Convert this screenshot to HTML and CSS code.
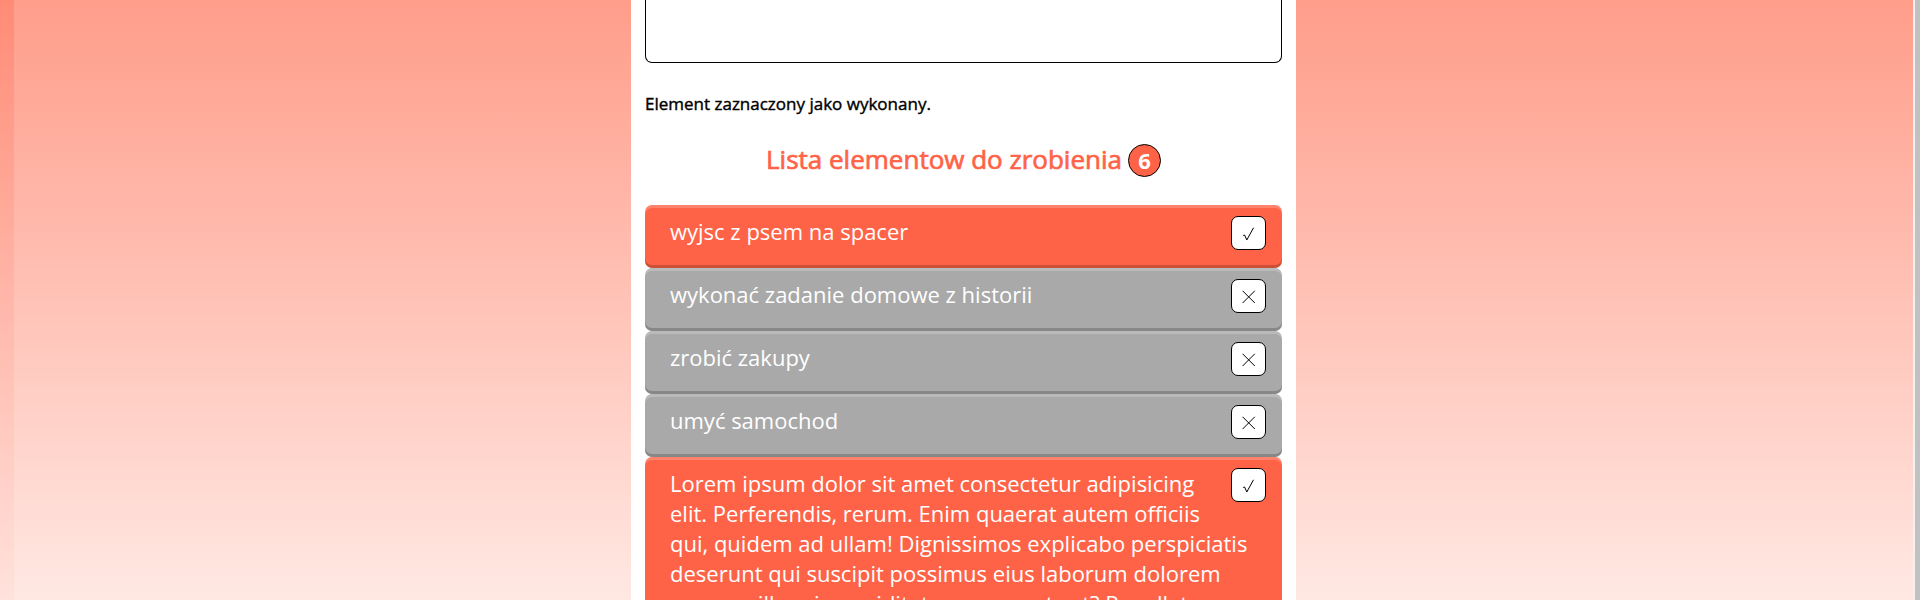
FILE: index.html
```html
<!DOCTYPE html>
<html lang="pl">
<head>
<meta charset="utf-8">
<title>Lista zadań</title>
<link rel="stylesheet" href="styles.css">
</head>
<body>
<div class="page">
  <div class="edge"></div>
  <main class="panel">
    <textarea class="entry" aria-label="Nowy element"></textarea>
    <p class="status">Element zaznaczony jako wykonany.</p>
    <h1 class="heading">Lista elementow do zrobienia <span class="count">6</span></h1>
    <ul class="list">
      <li class="item"><button class="toggle" aria-label="Wykonane"><svg class="icon" viewBox="0 0 14 14"><path d="M1.2 8.5L2.6 8L4.8 13L11.5 0.8"/></svg></button>wyjsc z psem na spacer</li>
      <li class="item done"><button class="toggle" aria-label="Cofnij"><svg class="icon" viewBox="0 0 14 14"><path d="M0.6 0.8L12.8 13M12.8 0.8L0.6 13"/></svg></button>wykonać zadanie domowe z historii</li>
      <li class="item done"><button class="toggle" aria-label="Cofnij"><svg class="icon" viewBox="0 0 14 14"><path d="M0.6 0.8L12.8 13M12.8 0.8L0.6 13"/></svg></button>zrobić zakupy</li>
      <li class="item done"><button class="toggle" aria-label="Cofnij"><svg class="icon" viewBox="0 0 14 14"><path d="M0.6 0.8L12.8 13M12.8 0.8L0.6 13"/></svg></button>umyć samochod</li>
      <li class="item"><button class="toggle" aria-label="Wykonane"><svg class="icon" viewBox="0 0 14 14"><path d="M1.2 8.5L2.6 8L4.8 13L11.5 0.8"/></svg></button>Lorem ipsum dolor sit amet consectetur adipisicing elit. Perferendis, rerum. Enim quaerat autem officiis qui, quidem ad ullam! Dignissimos explicabo perspiciatis deserunt qui suscipit possimus eius laborum dolorem rerum a illum in cupiditate earum aut est? Repellat.</li>
    </ul>
  </main>
  <div class="scrollbar"></div>
</div>
</body>
</html>
```
FILE: styles.css
```css
* { box-sizing: border-box; }
body {
  margin: 0;
  font-family: "Open Sans", sans-serif;
}
.page {
  display: grid;
  grid-template-columns: 14px 1fr 7px;
  height: 100vh;
  overflow: hidden;
  background: linear-gradient(#ff9d8a, #ffe8e3);
}
.edge { background: linear-gradient(#ff8b76, #ffe8e3); }
.scrollbar {
  background: #c1c1c1;
  border-left: 2px solid #f1f1f1;
}
.panel {
  width: 665px;
  max-width: 100%;
  justify-self: center;
  padding: 0 14px;
  background: #fff;
}
.entry {
  display: block;
  width: 100%;
  height: 63px;
  border: 1px solid #000;
  border-top: 0;
  border-radius: 0 0 7px 7px;
  resize: none;
}
.status {
  margin: 30px 0 0;
  font-size: 17px;
  line-height: 22px;
  -webkit-text-stroke: 0.4px;
}
.heading {
  display: flex;
  justify-content: center;
  align-items: center;
  gap: 6px;
  margin: 25px 0 28px;
  color: tomato;
  font-size: 26px;
  font-weight: 400;
  line-height: 36px;
  -webkit-text-stroke: 0.7px;
}
.count {
  width: 33px;
  height: 33px;
  margin-top: 4px;
  border: 1px solid #000;
  border-radius: 50%;
  background: tomato;
  color: #fff;
  font-size: 22px;
  font-weight: 700;
  line-height: 31px;
  text-align: center;
  -webkit-text-stroke: 0;
}
.list {
  margin: 0;
  padding: 0;
  list-style: none;
}
.item {
  min-height: 63px;
  padding: 11px 16px 22px 25px;
  border-radius: 7px;
  background: tomato;
  box-shadow: inset 0 3px rgba(255, 255, 255, 0.2), inset 0 -3px rgba(0, 0, 0, 0.2);
  color: #fff;
  font-size: 22px;
  line-height: 30px;
}
.done { background: darkgray; }
.toggle {
  float: right;
  display: flex;
  align-items: center;
  justify-content: center;
  width: 35px;
  height: 34px;
  margin-left: 14px;
  padding: 2px 0 0;
  border: 1px solid #000;
  border-radius: 7px;
  background: #fff;
}
.icon {
  width: 14px;
  height: 14px;
  fill: none;
  stroke: #000;
  stroke-width: 1;
}
```
